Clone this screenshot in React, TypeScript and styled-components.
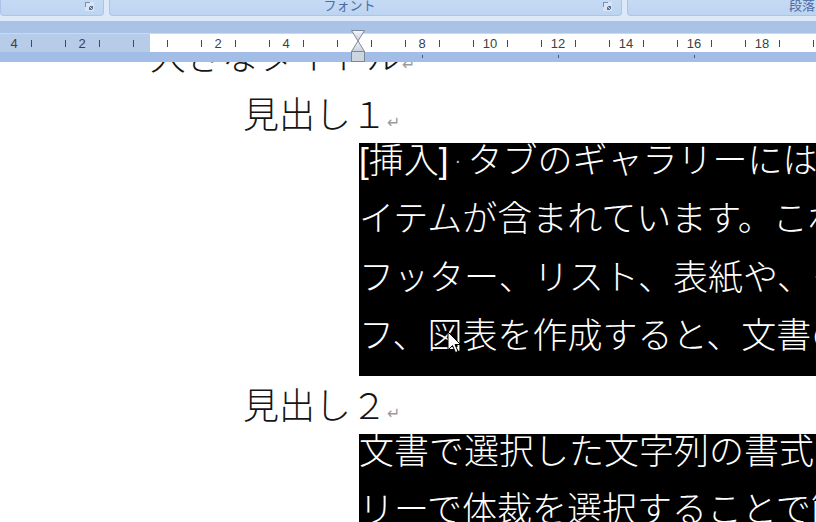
import styled, { createGlobalStyle } from "styled-components";

const GlobalStyle = createGlobalStyle`
  * { box-sizing: border-box; }
  html, body { margin: 0; padding: 0; background: #fff; overflow: hidden; }
`;

const Screen = styled.div`
  position: relative;
  width: 816px;
  height: 522px;
  overflow: hidden;
  display: flex;
  flex-direction: column;
  font-family: "Noto Sans CJK JP", sans-serif;
`;

// ribbon group strip (bottom of the ribbon, labels cut off at top)
const Ribbon = styled.div`
  flex: none;
  height: 21px;
  display: flex;
  gap: 5px;
  overflow: hidden;
  background: #dde9f8;
`;
const Group = styled.div<{ $w: number }>`
  flex: none;
  width: ${(p) => p.$w}px;
  height: 16px;
  display: flex;
  align-items: flex-start;
  overflow: hidden;
  background: linear-gradient(#c5daf4, #bdd4f1);
  border: 1px solid #aac5e9;
  border-top: none;
  border-radius: 0 0 4px 4px;
`;
const GroupLabel = styled.div`
  flex: 1;
  text-align: center;
  font-size: 13px;
  line-height: 14px;
  margin-top: -2px;
  color: #4a6da7;
  white-space: nowrap;
`;
const Launcher = styled.svg`
  flex: none;
  margin: 2px 9px 0 14px;
`;

const RulerArea = styled.div`
  position: relative;
  flex: none;
  height: 41px;
  display: flex;
  flex-direction: column;
  background: #a8c2e7;
`;
const TopBand = styled.div`
  height: 12px;
  background: #a9c3e7;
`;
const RulerStrip = styled.div`
  height: 19px;
  overflow: hidden;
  background: linear-gradient(to right, #b7cce9 150px, #ffffff 150px);
  border-top: 1px solid #c9d9ef;
`;
const RulerTrack = styled.div`
  display: flex;
  height: 100%;
  margin-left: -11.5px;
`;
const Cell = styled.div`
  flex: none;
  width: 17px;
  display: flex;
  align-items: center;
  justify-content: center;
`;
const Tick = styled.div`
  width: 1px;
  height: 7px;
  background: #4a4a4a;
`;
const Num = styled.span`
  font-family: "Liberation Sans", sans-serif;
  font-size: 13px;
  color: #404040;
`;
const BottomBand = styled.div`
  height: 10px;
  display: flex;
  gap: 135px;
  padding: 3px 0 0 422px;
  background: #a2bee7;
`;
const TabStop = styled.div`
  width: 1px;
  height: 3px;
  background: #4b5a70;
`;
const IndentMarker = styled.svg`
  position: absolute;
  left: 351px;
  top: 9px;
`;

const Document = styled.div`
  flex: 1;
  overflow: hidden;
  background: #fff;
`;
const Page = styled.div`
  margin-top: -35px;
`;
const Heading = styled.div<{ $indent: number }>`
  height: 58px;
  line-height: 54px;
  padding-left: ${(p) => p.$indent}px;
  font-size: 36px;
  font-weight: 300;
  color: #151515;
  white-space: nowrap;
`;
const ReturnMark = styled.span`
  font-family: "DejaVu Sans", sans-serif;
  font-size: 16px;
  font-weight: 400;
  color: #9a9a9a;
  margin-left: 0;
`;
const Block = styled.div`
  margin-left: 359px;
  width: 620px;
  background: #000;
  color: #fff;
  font-family: "Liberation Sans", "Noto Sans CJK JP", sans-serif;
  font-size: 35px;
  font-weight: 300;
`;
const BlockLine = styled.div`
  height: 58.25px;
  line-height: 35px;
  white-space: nowrap;
  overflow: hidden;
`;
const SpaceDot = styled.span`
  display: inline-block;
  width: 19px;
  text-align: center;
  color: #bbb;
  font-size: 20px;
  vertical-align: top;
`;
const Cursor = styled.svg`
  position: absolute;
  left: 447px;
  top: 331px;
`;

const LauncherIcon = () => (
  <Launcher width="9" height="9" viewBox="0 0 9 9">
    <rect x="0" y="0" width="9" height="9" fill="#d9e5f5" />
    <path d="M0.5 0 V5 M0 0.5 H5" stroke="#7b8fae" />
    <rect x="4" y="4" width="4" height="4" fill="#5f7294" />
    <path d="M4 4 L8 8" stroke="#e9f0fa" strokeWidth="0.8" />
  </Launcher>
);

const groups = [
  { w: 104, label: "" },
  { w: 513, label: "フォント" },
  { w: 382, label: "段落" },
];

// ruler positions in half-character steps from the left margin; 6 is hidden under the indent marker
const cells = Array.from({ length: 52 }, (_, i) => i - 9);

const block1 = [
  "タブのギャラリーには、文書全体の",
  "イテムが含まれています。これらの",
  "フッター、リスト、表紙や、その他",
  "フ、図表を作成すると、文書の現在の",
];
const block2 = [
  "文書で選択した文字列の書式は、",
  "リーで体裁を選択することで簡単に",
];

export default function App() {
  return (
    <Screen>
      <GlobalStyle />
      <Ribbon>
        {groups.map((g, i) => (
          <Group key={i} $w={g.w}>
            <GroupLabel>{g.label}</GroupLabel>
            <LauncherIcon />
          </Group>
        ))}
      </Ribbon>
      <RulerArea>
        <TopBand />
        <RulerStrip>
          <RulerTrack>
            {cells.map((k) => (
              <Cell key={k}>
                {k % 2 !== 0 ? (
                  <Tick />
                ) : k !== 0 && k !== 12 && k % 4 === 0 ? (
                  <Num>{Math.abs(k) / 2}</Num>
                ) : null}
              </Cell>
            ))}
          </RulerTrack>
        </RulerStrip>
        <BottomBand>
          <TabStop />
          <TabStop />
          <TabStop />
        </BottomBand>
        <IndentMarker width="14" height="32" viewBox="0 0 14 32">
          <defs>
            <linearGradient id="im" x1="0" y1="0" x2="0" y2="1">
              <stop offset="0" stopColor="#f4f6f9" />
              <stop offset="1" stopColor="#c8d0db" />
            </linearGradient>
          </defs>
          <path d="M0.5 0.5 H13.5 L7 11 Z" fill="url(#im)" stroke="#7c8799" />
          <path d="M7 11 L13.5 21.5 H0.5 Z" fill="url(#im)" stroke="#7c8799" />
          <rect x="0.5" y="21.5" width="13" height="10" fill="#cdd5e0" stroke="#7c8799" />
        </IndentMarker>
      </RulerArea>
      <Document>
        <Page>
          <Heading $indent={150}>
            大きなタイトル<ReturnMark>↵</ReturnMark>
          </Heading>
          <Heading $indent={243}>
            見出し１<ReturnMark>↵</ReturnMark>
          </Heading>
          <Block>
            <BlockLine>
              [挿入]<SpaceDot>·</SpaceDot>
              {block1[0]}
            </BlockLine>
            {block1.slice(1).map((t) => (
              <BlockLine key={t}>{t}</BlockLine>
            ))}
          </Block>
          <Heading $indent={243}>
            見出し２<ReturnMark>↵</ReturnMark>
          </Heading>
          <Block>
            {block2.map((t) => (
              <BlockLine key={t}>{t}</BlockLine>
            ))}
          </Block>
        </Page>
      </Document>
      <Cursor width="14" height="24" viewBox="0 0 14 24">
        <path
          d="M1 1 L1 19 L5.5 14.5 L8.5 21.5 L11 20.5 L8 13.5 L13.5 13.5 Z"
          fill="#fff"
          stroke="#000"
          strokeWidth="1"
        />
      </Cursor>
    </Screen>
  );
}
